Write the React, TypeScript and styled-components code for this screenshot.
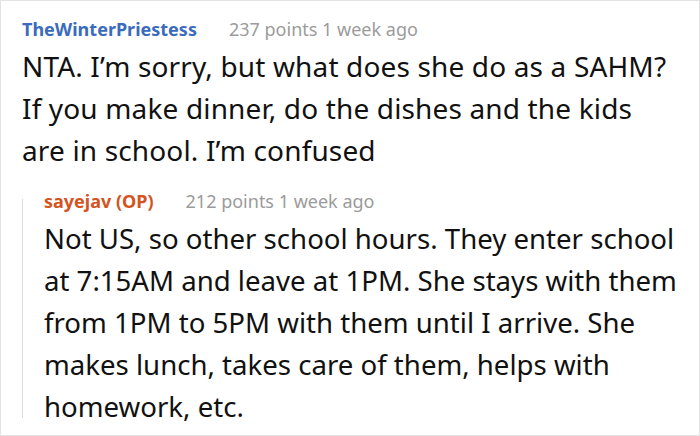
import React from 'react';
import styled, { createGlobalStyle } from 'styled-components';

interface Comment {
  author: string;
  op?: boolean;
  points: number;
  time: string;
  body: string;
}

const top: Comment = {
  author: 'TheWinterPriestess',
  points: 237,
  time: '1 week ago',
  body: 'NTA. I’m sorry, but what does she do as a SAHM? If you make dinner, do the dishes and the kids are in school. I’m confused',
};

const reply: Comment = {
  author: 'sayejav (OP)',
  op: true,
  points: 212,
  time: '1 week ago',
  body: 'Not US, so other school hours. They enter school at 7:15AM and leave at 1PM. She stays with them from 1PM to 5PM with them until I arrive. She makes lunch, takes care of them, helps with homework, etc.',
};

const GlobalStyle = createGlobalStyle`
  html, body {
    margin: 0;
    padding: 0;
    background: #ffffff;
  }
  body {
    font-family: 'Noto Sans', 'Open Sans', sans-serif;
  }
`;

const Card = styled.div`
  width: 700px;
  height: 436px;
  box-sizing: border-box;
  border: 1px solid #e3e3e3;
  padding: 16px 6px 0 21px;
  overflow: hidden;
`;

const Header = styled.div`
  display: flex;
  align-items: baseline;
  gap: 32px;
  height: 28px;
`;

const Author = styled.span<{ $op?: boolean }>`
  font-size: 18px;
  font-weight: 700;
  color: ${(p) => (p.$op ? '#d3541f' : '#3a6bbd')};
`;

const Meta = styled.span`
  font-size: 18px;
  color: #9b9b9b;
`;

const Body = styled.p<{ $width: number; $size: number; $spacing: number }>`
  margin: 0;
  width: ${(p) => p.$width}px;
  font-size: ${(p) => p.$size}px;
  letter-spacing: ${(p) => p.$spacing}px;
  line-height: 42px;
  color: #111111;
`;

const Reply = styled.div`
  position: relative;
  margin-top: 18px;
  padding-left: 22px;

  &::before {
    content: '';
    position: absolute;
    left: 0;
    top: 10px;
    bottom: 9px;
    width: 1px;
    background: #dcdcdc;
  }
`;

interface BlockProps {
  c: Comment;
  width: number;
  size: number;
  spacing?: number;
}

const CommentBlock = ({ c, width, size, spacing = 0 }: BlockProps) => (
  <>
    <Header>
      <Author $op={c.op}>{c.author}</Author>
      <Meta>
        {c.points} points {c.time}
      </Meta>
    </Header>
    <Body $width={width} $size={size} $spacing={spacing}>
      {c.body}
    </Body>
  </>
);

export default function App() {
  return (
    <>
      <GlobalStyle />
      <Card>
        <CommentBlock c={top} width={650} size={28} spacing={0.15} />
        <Reply>
          <CommentBlock c={reply} width={648} size={27.6} />
        </Reply>
      </Card>
    </>
  );
}
